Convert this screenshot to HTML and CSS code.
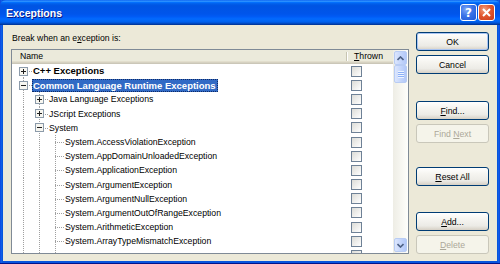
FILE: index.html
```html
<!DOCTYPE html>
<html>
<head>
<meta charset="utf-8">
<title>Exceptions</title>
<link rel="stylesheet" href="styles.css">
</head>
<body>
<div class="window">
  <div class="titlebar">
    <span class="title">Exceptions</span>
    <div class="tb-buttons">
      <span class="tb-btn help">?</span>
      <span class="tb-btn close"><svg width="9" height="9" viewBox="0 0 9 9"><path d="M1 1L8 8M8 1L1 8"/></svg></span>
    </div>
  </div>
  <div class="body">
    <div class="main">
      <div class="caption">Break when an e<u>x</u>ception is:</div>
      <div class="list">
        <div class="list-inner">
          <div class="header">
            <div class="h-name">Name</div>
            <div class="h-thrown"><u>T</u>hrown</div>
          </div>
          <div class="rows">
            <div class="row">
              <div class="cell-name">
                <span class="g f"><svg class="box" viewBox="0 0 9 9"><rect x=".5" y=".5" width="8" height="8"/><path d="M2 4.5h5M4.5 2v5"/></svg></span>
                <span class="label bold">C++ Exceptions</span>
              </div>
              <div class="cell-thrown"><span class="cb"></span></div>
            </div>
            <div class="row">
              <div class="cell-name">
                <span class="g t"><svg class="box" viewBox="0 0 9 9"><rect x=".5" y=".5" width="8" height="8"/><path d="M2 4.5h5"/></svg></span>
                <span class="label bold selected">Common Language Runtime Exceptions</span>
              </div>
              <div class="cell-thrown"><span class="cb"></span></div>
            </div>
            <div class="row">
              <div class="cell-name">
                <span class="g v"></span>
                <span class="g t"><svg class="box" viewBox="0 0 9 9"><rect x=".5" y=".5" width="8" height="8"/><path d="M2 4.5h5M4.5 2v5"/></svg></span>
                <span class="label">Java Language Exceptions</span>
              </div>
              <div class="cell-thrown"><span class="cb"></span></div>
            </div>
            <div class="row">
              <div class="cell-name">
                <span class="g v"></span>
                <span class="g t"><svg class="box" viewBox="0 0 9 9"><rect x=".5" y=".5" width="8" height="8"/><path d="M2 4.5h5M4.5 2v5"/></svg></span>
                <span class="label">JScript Exceptions</span>
              </div>
              <div class="cell-thrown"><span class="cb"></span></div>
            </div>
            <div class="row">
              <div class="cell-name">
                <span class="g v"></span>
                <span class="g t"><svg class="box" viewBox="0 0 9 9"><rect x=".5" y=".5" width="8" height="8"/><path d="M2 4.5h5"/></svg></span>
                <span class="label">System</span>
              </div>
              <div class="cell-thrown"><span class="cb"></span></div>
            </div>
            <div class="row">
              <div class="cell-name"><span class="g v"></span><span class="g v"></span><span class="g t"></span><span class="label">System.AccessViolationException</span></div>
              <div class="cell-thrown"><span class="cb"></span></div>
            </div>
            <div class="row">
              <div class="cell-name"><span class="g v"></span><span class="g v"></span><span class="g t"></span><span class="label">System.AppDomainUnloadedException</span></div>
              <div class="cell-thrown"><span class="cb"></span></div>
            </div>
            <div class="row">
              <div class="cell-name"><span class="g v"></span><span class="g v"></span><span class="g t"></span><span class="label">System.ApplicationException</span></div>
              <div class="cell-thrown"><span class="cb"></span></div>
            </div>
            <div class="row">
              <div class="cell-name"><span class="g v"></span><span class="g v"></span><span class="g t"></span><span class="label">System.ArgumentException</span></div>
              <div class="cell-thrown"><span class="cb"></span></div>
            </div>
            <div class="row">
              <div class="cell-name"><span class="g v"></span><span class="g v"></span><span class="g t"></span><span class="label">System.ArgumentNullException</span></div>
              <div class="cell-thrown"><span class="cb"></span></div>
            </div>
            <div class="row">
              <div class="cell-name"><span class="g v"></span><span class="g v"></span><span class="g t"></span><span class="label">System.ArgumentOutOfRangeException</span></div>
              <div class="cell-thrown"><span class="cb"></span></div>
            </div>
            <div class="row">
              <div class="cell-name"><span class="g v"></span><span class="g v"></span><span class="g t"></span><span class="label">System.ArithmeticException</span></div>
              <div class="cell-thrown"><span class="cb"></span></div>
            </div>
            <div class="row">
              <div class="cell-name"><span class="g v"></span><span class="g v"></span><span class="g t"></span><span class="label">System.ArrayTypeMismatchException</span></div>
              <div class="cell-thrown"><span class="cb"></span></div>
            </div>
            <div class="row">
              <div class="cell-name"><span class="g v"></span><span class="g v"></span><span class="g v"></span></div>
              <div class="cell-thrown"><span class="cb"></span></div>
            </div>
          </div>
        </div>
        <div class="scrollbar">
          <div class="sb-btn"><svg width="7" height="5" viewBox="0 0 7 5"><path d="M0.5 4L3.5 1L6.5 4"/></svg></div>
          <div class="sb-thumb"><span class="grip"></span></div>
          <div class="sb-track"></div>
          <div class="sb-btn"><svg width="7" height="5" viewBox="0 0 7 5"><path d="M0.5 1L3.5 4L6.5 1"/></svg></div>
        </div>
      </div>
    </div>
    <div class="buttons">
      <div class="btn default"><span>OK</span></div>
      <div class="btn gap-s"><span>Cancel</span></div>
      <div class="btn gap-find"><span><u>F</u>ind...</span></div>
      <div class="btn gap-s disabled"><span>Find <u>N</u>ext</span></div>
      <div class="btn gap-reset"><span><u>R</u>eset All</span></div>
      <div class="btn gap-add"><span><u>A</u>dd...</span></div>
      <div class="btn gap-s disabled"><span><u>D</u>elete</span></div>
    </div>
  </div>
</div>
</body>
</html>
```
FILE: styles.css
```css
* { box-sizing: border-box; margin: 0; padding: 0; }
html, body { width: 500px; height: 264px; overflow: hidden; }
body {
  font-family: "Liberation Sans", Arial, sans-serif;
  font-size: 8.7px;
  color: #000;
  background: #0A4FDB;
}
u { text-decoration: underline; text-underline-offset: 1px; }

.window {
  width: 500px;
  height: 264px;
  display: flex;
  flex-direction: column;
  background: linear-gradient(to right, #0831D9 0, #166AEE 1px, #0855DD 2px, #0855DD 498px, #166AEE 499px, #0831D9 500px);
  border-bottom: 1px solid #00138C;
}

.titlebar {
  height: 25px;
  flex: none;
  display: flex;
  align-items: center;
  justify-content: space-between;
  padding: 0 5px 0 6px;
  border-radius: 6px 6px 0 0;
  background: linear-gradient(to bottom, #0058EE 0%, #3593FF 4%, #288EFF 6%, #127DFF 8%, #036FFC 10%, #0262EE 14%, #0057E5 20%, #0054E3 24%, #0055EB 56%, #005BF5 66%, #026AFE 76%, #0062EF 86%, #0052D6 92%, #0040AB 96%, #003092 100%);
}
.title {
  color: #fff;
  font-weight: 700;
  font-size: 10.5px;
  text-shadow: 1px 1px #0A1883;
  padding-top: 1px;
}
.tb-buttons { display: flex; gap: 1px; }
.tb-btn {
  width: 17px;
  height: 17px;
  border: 1px solid #fff;
  border-radius: 3px;
  display: flex;
  align-items: center;
  justify-content: center;
  color: #fff;
}
.help {
  background: radial-gradient(circle at 35% 30%, #7EA8F8 0, #3A73E8 45%, #1C56D8 100%);
  font-family: "DejaVu Sans", sans-serif;
  font-weight: 700;
  font-size: 12px;
}
.close {
  background: radial-gradient(circle at 35% 30%, #F0A080 0, #E2582F 45%, #C8391B 100%);
}
.close svg path { stroke: #fff; stroke-width: 2; fill: none; }

.body {
  flex: 1;
  margin: 0 3px 2px 3px;
  background: #ECE9D8;
  display: flex;
  gap: 7px;
  padding: 0 8px;
}

.main {
  width: 398px;
  flex: none;
  display: flex;
  flex-direction: column;
  padding-top: 7px;
}
.caption {
  height: 17px;
  line-height: 13px;
  padding-left: 1px;
}

.list {
  height: 205px;
  display: flex;
  border: 1px solid #7F8A96;
  background: #fff;
}
.list-inner {
  flex: 1;
  display: flex;
  flex-direction: column;
  min-width: 0;
}
.header {
  height: 14px;
  flex: none;
  display: flex;
  background: #EBEADB;
  box-shadow: inset 0 -1px #CBC7B8, inset 0 -2px #D6D2C2, inset 0 -3px #E2DECD;
  line-height: 12px;
}
.h-name {
  flex: 1;
  padding-left: 8px;
  background: linear-gradient(#C7C5B2, #C7C5B2) right 2px / 1px 9px no-repeat;
}
.h-thrown {
  width: 46px;
  flex: none;
  padding-left: 7px;
  background: linear-gradient(#fff, #fff) left 2px / 1px 9px no-repeat;
}

.rows {
  flex: 1;
  overflow: hidden;
  display: flex;
  flex-direction: column;
  --vl: repeating-linear-gradient(to bottom, #A0A0A0 0 1px, transparent 1px 2px);
  --hl: repeating-linear-gradient(to right, #A0A0A0 0 1px, transparent 1px 2px);
}
.row {
  height: 14.2px;
  flex: none;
  display: flex;
}
.cell-name {
  flex: 1;
  display: flex;
  align-items: stretch;
  padding-left: 4px;
  min-width: 0;
}
.g {
  width: 16px;
  flex: none;
  display: flex;
  align-items: center;
  padding-left: 3px;
  background-repeat: no-repeat;
}
.g.v {
  background-image: var(--vl);
  background-size: 1px 100%;
  background-position: 7px 0;
}
.g.t {
  background-image: var(--vl), var(--hl);
  background-size: 1px 100%, 9px 1px;
  background-position: 7px 0, 7px 7px;
}
.g.f {
  background-image: var(--vl), var(--hl);
  background-size: 1px 7px, 9px 1px;
  background-position: 7px 7px, 7px 7px;
}
.box {
  width: 9px;
  height: 9px;
  display: block;
}
.box rect { fill: #F7F6F0; stroke: #8C9BAA; }
.box path { stroke: #1E1E1E; fill: none; }

.label {
  align-self: center;
  white-space: nowrap;
  line-height: 12px;
  padding: 0 2px 0 1px;
}
.bold { font-weight: 700; font-size: 9.5px; }
.selected {
  background: #316AC5;
  color: #fff;
  outline: 1px dotted #0E2A66;
  outline-offset: -1px;
  line-height: 13px;
}

.cell-thrown {
  width: 46px;
  flex: none;
  display: flex;
  align-items: center;
  padding-left: 4px;
}
.cb {
  width: 11px;
  height: 11px;
  border: 1px solid #6E8196;
  background: linear-gradient(135deg, #DCDCD7, #FFFFFF);
}

.scrollbar {
  width: 15px;
  flex: none;
  display: flex;
  flex-direction: column;
  padding: 1px;
  background: linear-gradient(to right, #EEEDE5, #FEFEFB);
}
.sb-btn, .sb-thumb {
  border: 1px solid #B8CCF4;
  border-radius: 2px;
  background: linear-gradient(to right, #DCE6FD, #C1D3FB 60%, #B3C8F8);
  display: flex;
  align-items: center;
  justify-content: center;
  flex: none;
}
.sb-btn { height: 14px; }
.sb-btn svg path { stroke: #4D6185; stroke-width: 1.6; fill: none; }
.sb-thumb { height: 18px; }
.grip {
  width: 6px;
  height: 7px;
  background: repeating-linear-gradient(to bottom, #EEF4FE 0 1px, #8CB0F8 1px 2px);
}
.sb-track { flex: 1; }

.buttons {
  width: 73px;
  flex: none;
  display: flex;
  flex-direction: column;
  padding-top: 7px;
}
.btn {
  height: 19px;
  flex: none;
  border: 1px solid #003C74;
  border-radius: 3px;
  background: linear-gradient(#FFFFFF 0, #F7F6F2 30%, #ECEBE6 75%, #D6D0C5 100%);
  display: flex;
  align-items: center;
  justify-content: center;
  white-space: nowrap;
}
.btn.default { box-shadow: inset 0 0 0 1px #A9C4F2; }
.btn.disabled {
  border-color: #C9C7BA;
  background: #F5F4EA;
  color: #ACA899;
}
.gap-s { margin-top: 4px; }
.gap-find { margin-top: 27px; }
.gap-reset { margin-top: 24px; }
.gap-add { margin-top: 26px; }
```
